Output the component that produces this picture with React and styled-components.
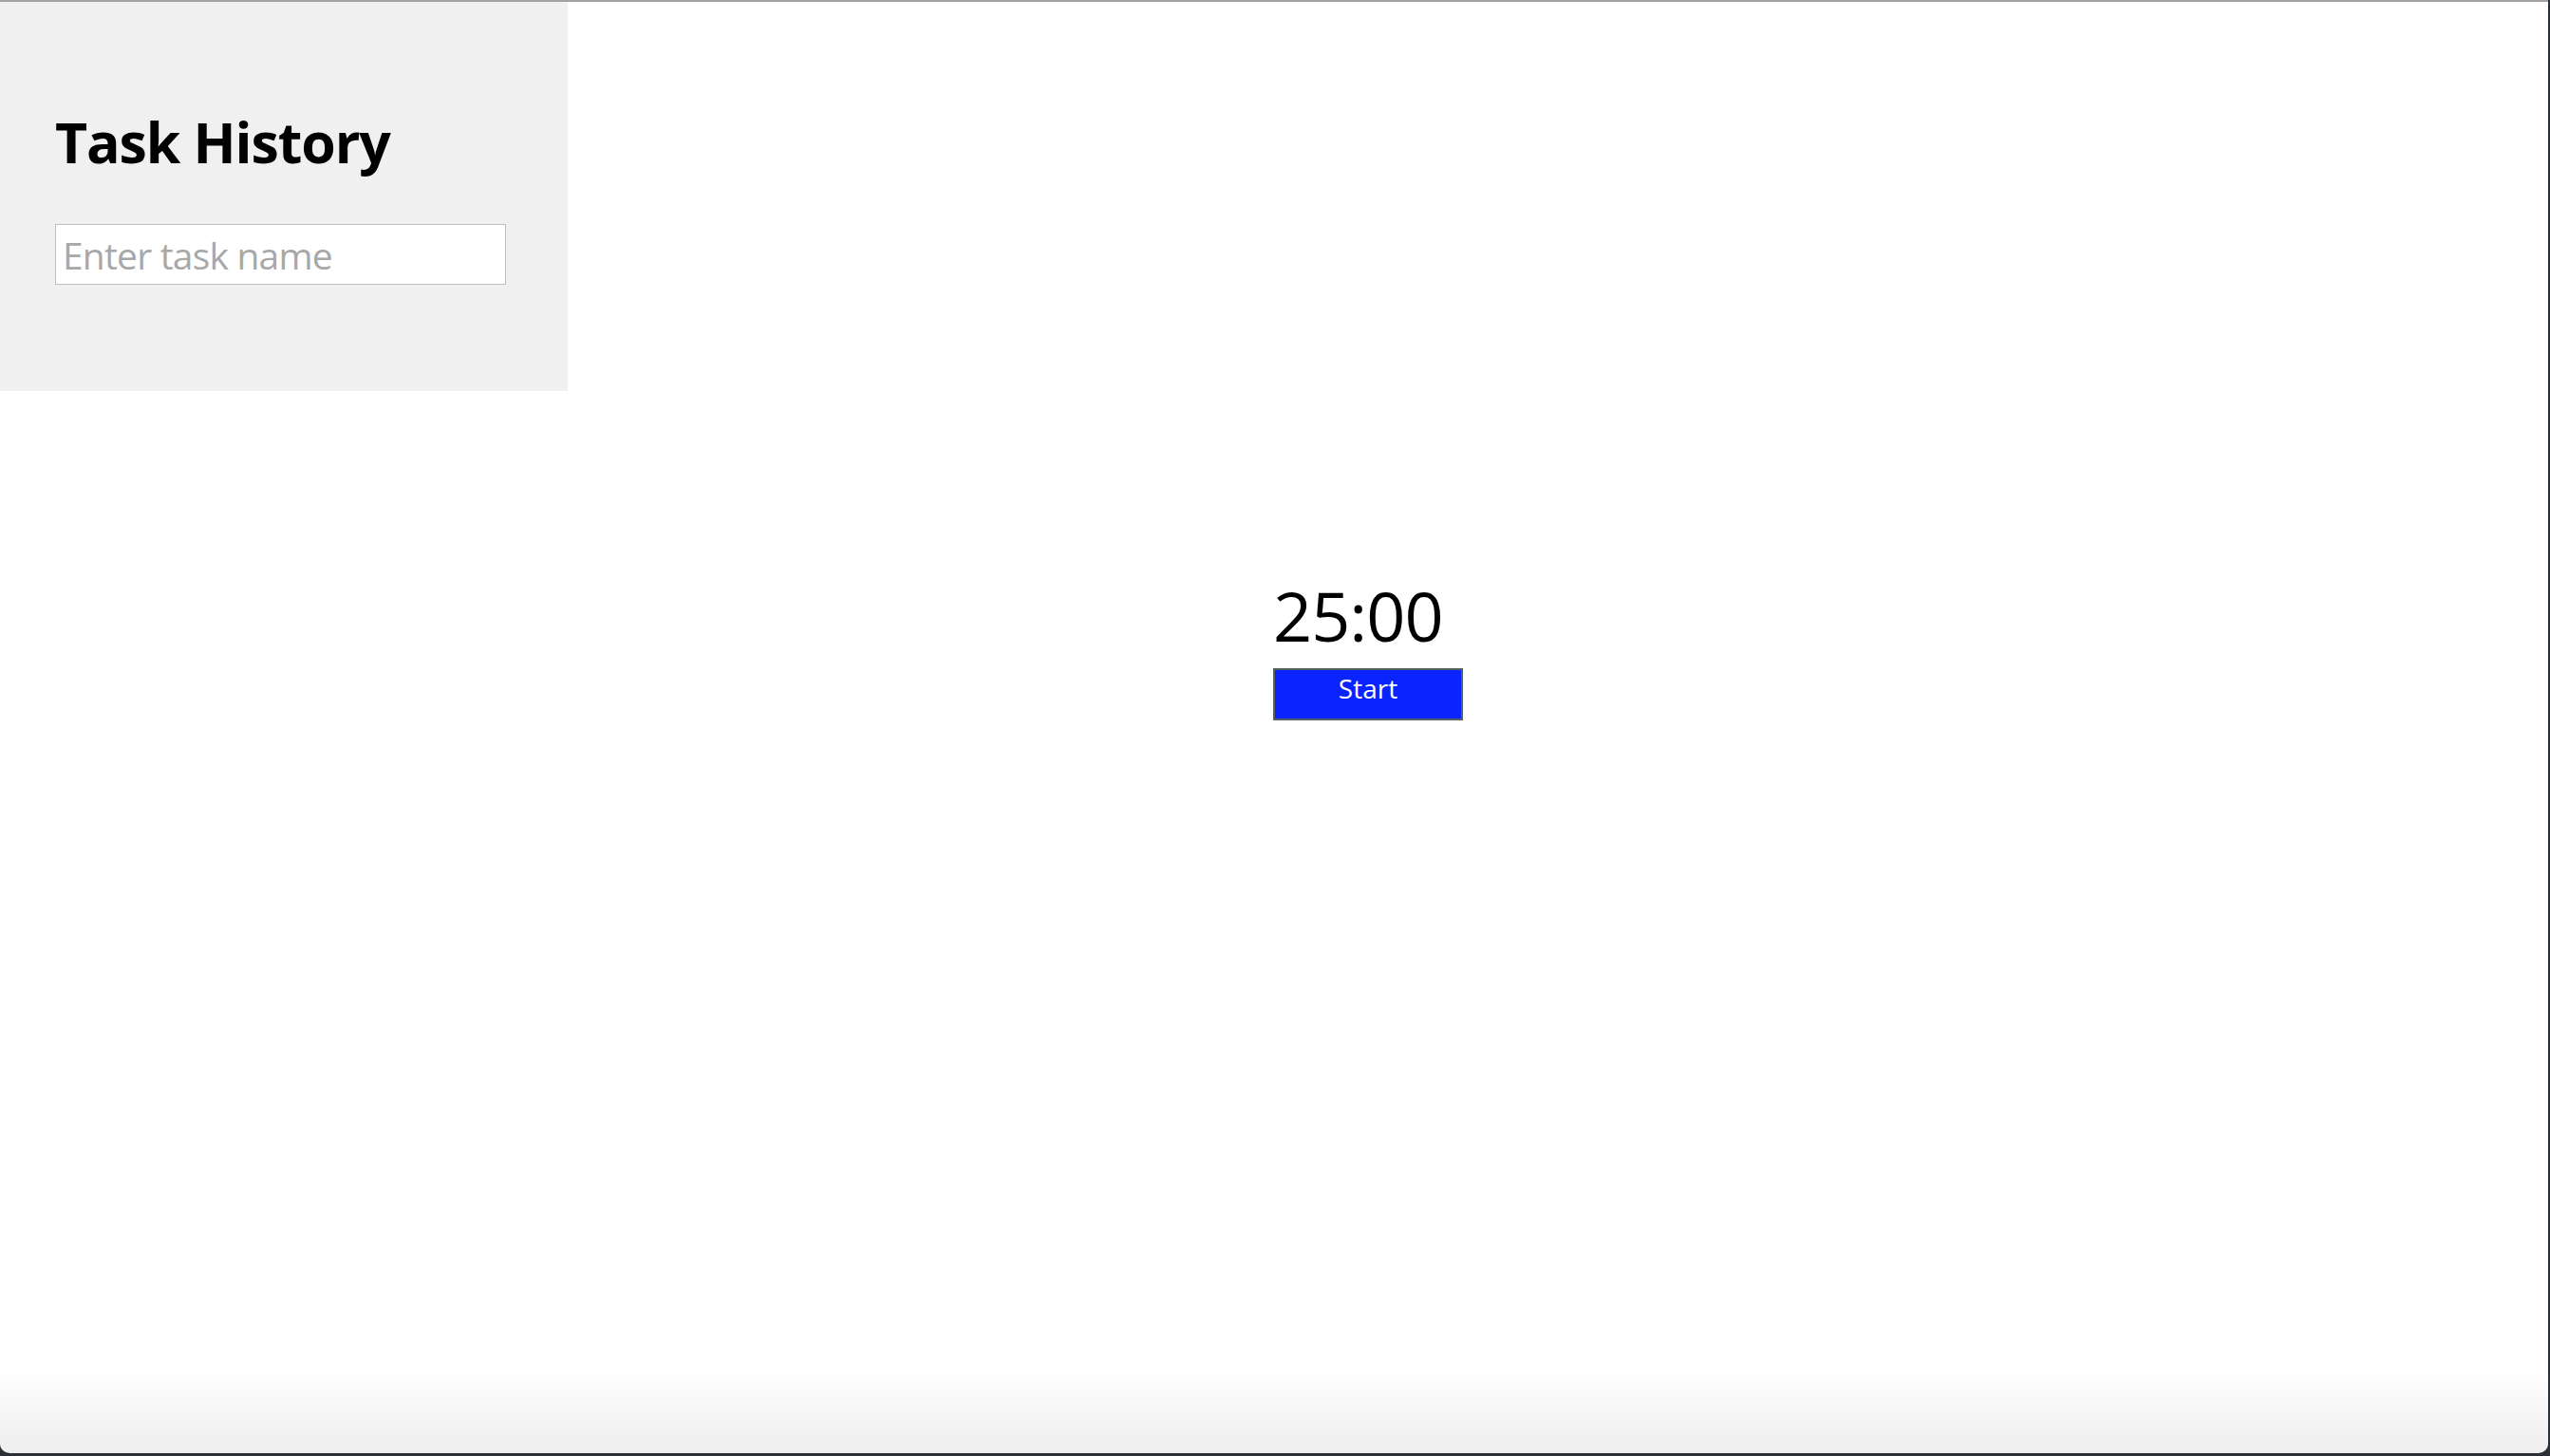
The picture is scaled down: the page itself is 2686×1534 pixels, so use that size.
import styled, { createGlobalStyle } from 'styled-components';

const GlobalStyle = createGlobalStyle`
  html,
  body {
    margin: 0;
    padding: 0;
    background-color: #2b2f38;
  }

  body {
    font-family: 'Open Sans', 'Noto Sans', sans-serif;
  }
`;

const Window = styled.div`
  box-sizing: border-box;
  height: calc(100vh - 3px);
  margin-right: 2px;
  overflow: hidden;

  display: flex;
  align-items: flex-start;

  border-top: 2px solid #a3a3a3;
  border-bottom-left-radius: 10px;
  border-bottom-right-radius: 10px;
  background: linear-gradient(to bottom, #ffffff calc(100% - 90px), #eeeeee 100%);
`;

const Sidebar = styled.aside`
  box-sizing: border-box;
  width: 598px;
  flex-shrink: 0;
  padding: 106px 58px 112px;
  background-color: #f0f0f0;
`;

const Title = styled.h2`
  margin: 0 0 46px;
  font-size: 59px;
  line-height: 82px;
  font-weight: 700;
  letter-spacing: -1.1px;
  color: #000;
`;

const TaskInput = styled.input`
  box-sizing: border-box;
  width: 475px;
  height: 64px;
  padding: 0 7px;
  border: 1px solid #bfbfbf;
  border-radius: 0;
  outline: none;
  background-color: #fff;
  font-family: 'Open Sans', 'Noto Sans', sans-serif;
  font-size: 39px;
  letter-spacing: -0.8px;
  color: #000;

  &::placeholder {
    color: #a8a8a8;
  }
`;

const Main = styled.main`
  flex: 1;
  padding: 597px 0 0 743px;
`;

const TimerBox = styled.div`
  display: flex;
  flex-direction: column;
  align-items: flex-start;
  gap: 7px;
`;

const Clock = styled.div`
  font-size: 72px;
  line-height: 98px;
  letter-spacing: -1px;
  color: #000;
`;

const StartButton = styled.button`
  box-sizing: border-box;
  width: 200px;
  height: 55px;
  padding: 0 0 16px;
  border: 2px solid #53625f;
  border-radius: 0;
  background-color: #0b23ff;
  color: #fff;
  font-family: 'Open Sans', 'Noto Sans', sans-serif;
  font-size: 28px;
  cursor: pointer;
`;

const App = () => {
  return (
    <>
      <GlobalStyle />
      <Window>
        <Sidebar>
          <Title>Task History</Title>
          <TaskInput type='text' placeholder='Enter task name' />
        </Sidebar>
        <Main>
          <TimerBox>
            <Clock>25:00</Clock>
            <StartButton>Start</StartButton>
          </TimerBox>
        </Main>
      </Window>
    </>
  );
};

export default App;
